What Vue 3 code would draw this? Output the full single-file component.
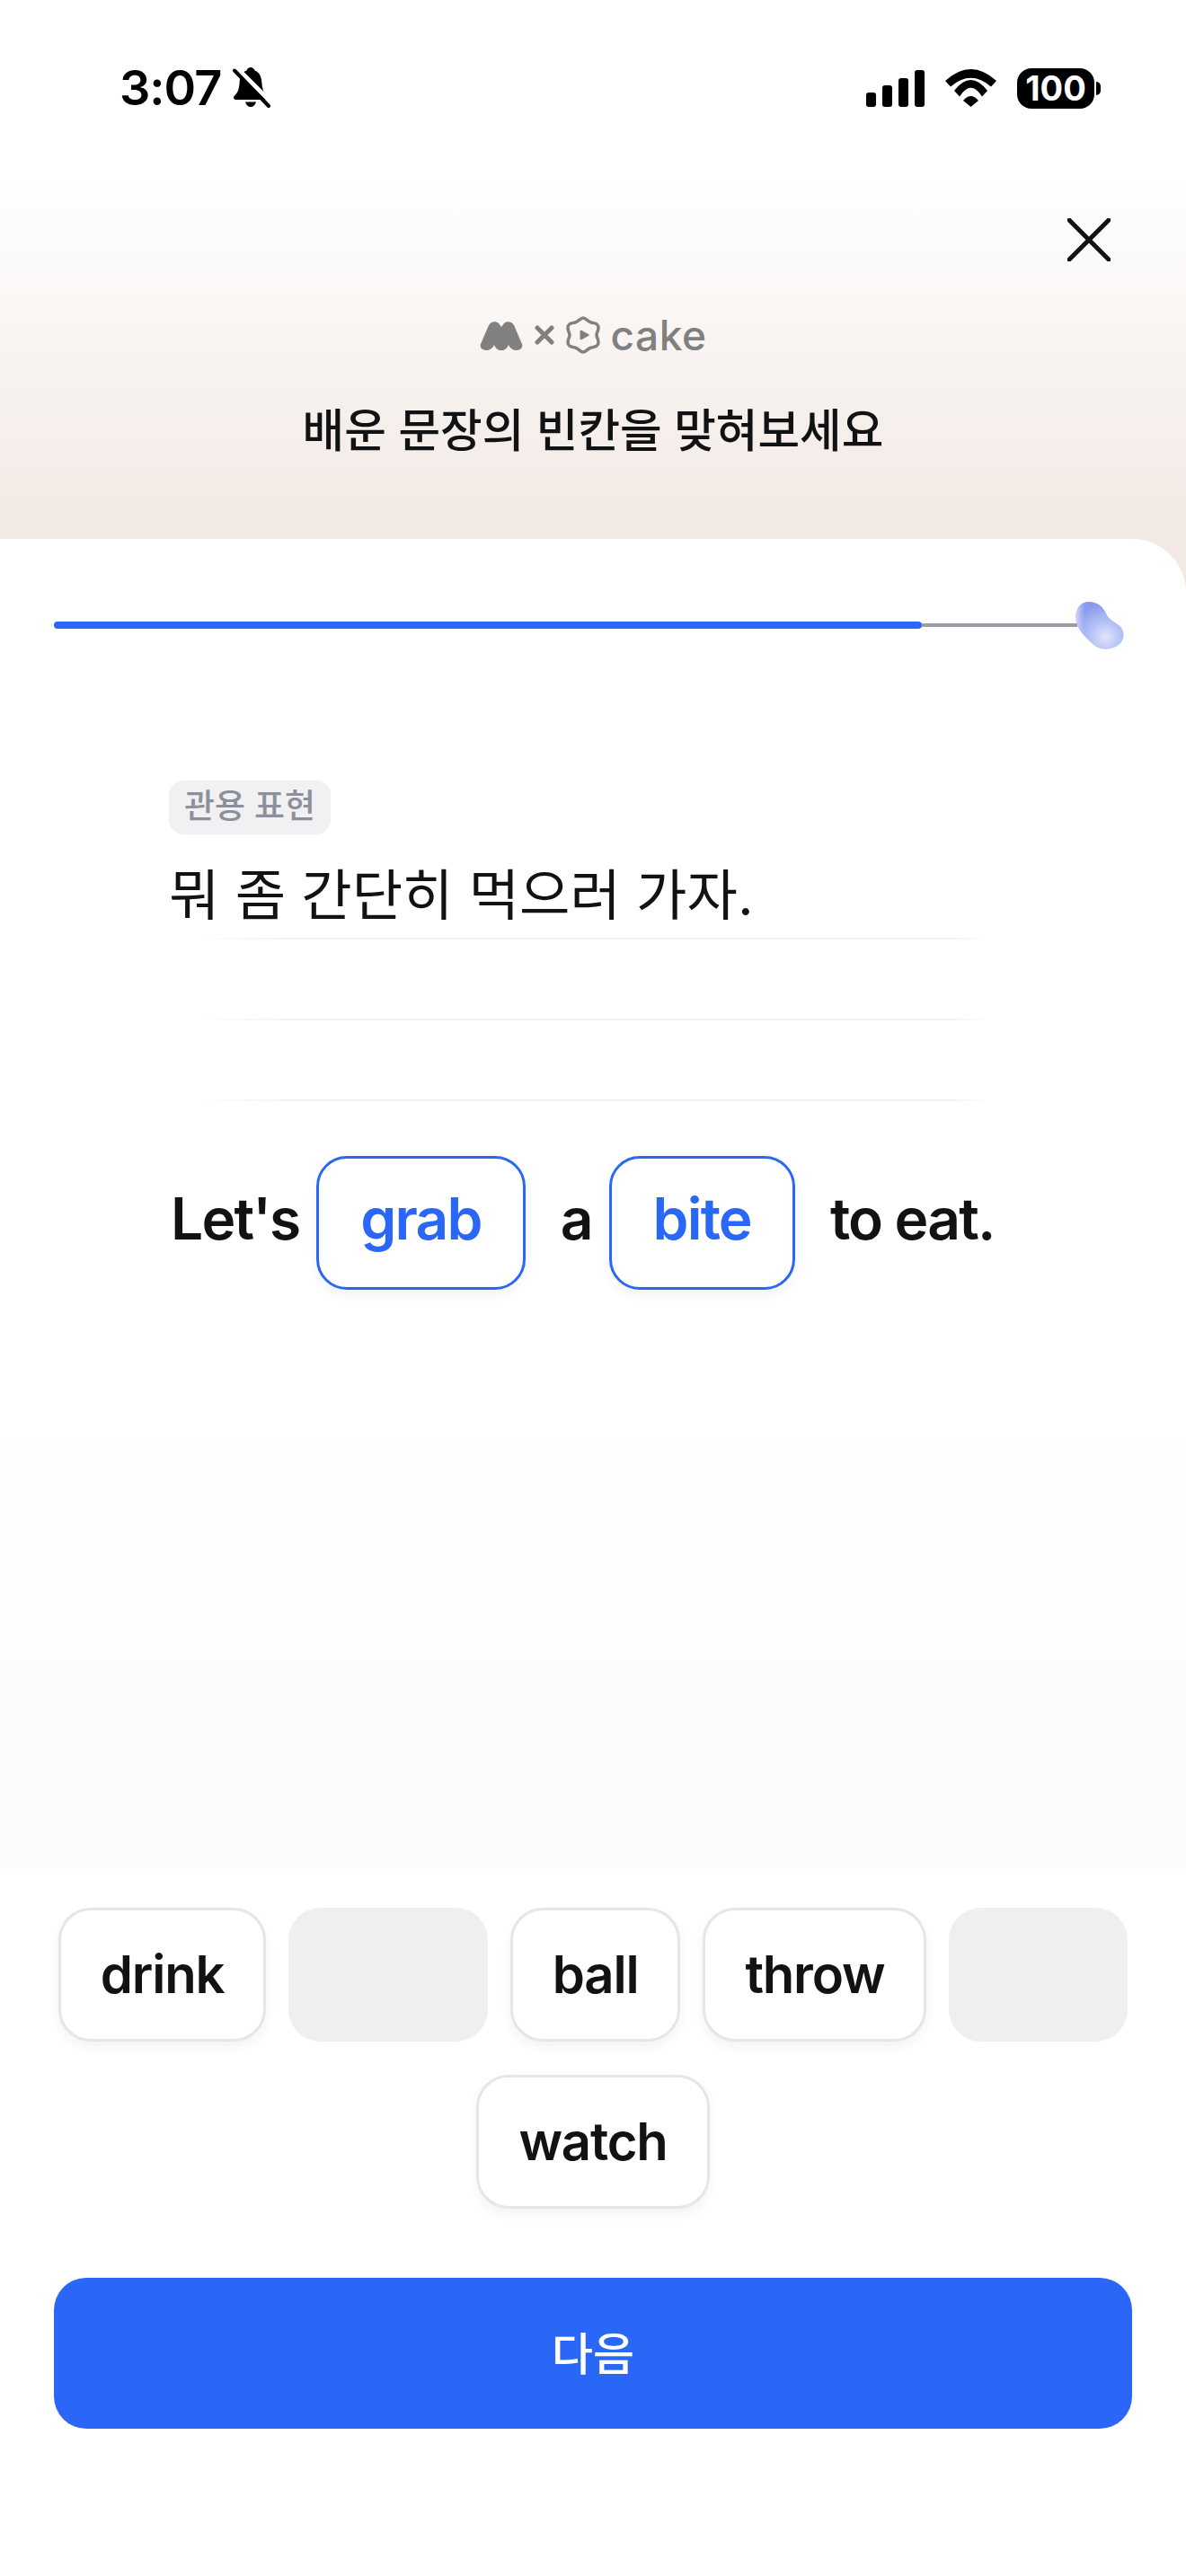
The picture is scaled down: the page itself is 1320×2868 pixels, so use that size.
<template>
  <div class="page">
    <div class="status">
      <div class="status-left">
        <span class="time">3:07</span>
        <svg class="bell" width="42" height="46" viewBox="0 0 42 46">
          <path d="M20 0C22 0 24 1.5 24.5 3.5C31 6 32 12 32.5 18C33 25 35 29 38 31.5C40 33.5 39 36 36 36L4 36C1 36 0 33.5 2 31.5C5 29 7 25 7.5 18C8 12 9 6 15.5 3.5C16 1.5 18 0 20 0Z" fill="#000" />
          <path d="M14 38.5H26C25 42 23 44 20 44C17 44 15 42 14 38.5Z" fill="#000" />
          <path d="M5 1L45 41" stroke="#fff" stroke-width="5" />
          <path d="M2 3.5L40 43" stroke="#000" stroke-width="4" stroke-linecap="round" />
        </svg>
      </div>
      <div class="status-right">
        <div class="signal">
          <i class="b1"></i><i class="b2"></i><i class="b3"></i><i class="b4"></i>
        </div>
        <svg class="wifi" width="57" height="42" viewBox="0 0 57 42">
          <path d="M0 13Q28.5 -13 57 13L51 19.5Q28.5 0 6 19.5Z" fill="#000" />
          <path d="M10 24Q28.5 0 47 24L41 30.5Q28.5 11 16 30.5Z" fill="#000" />
          <path d="M20 35Q28.5 25 37 35L28.5 42Z" fill="#000" />
        </svg>
        <div class="battery">100</div>
      </div>
    </div>

    <div class="header">
      <button class="close">
        <svg width="48" height="48" viewBox="0 0 48 48">
          <path d="M2 2L46 46M46 2L2 46" stroke="#111" stroke-width="5" stroke-linecap="round" />
        </svg>
      </button>
      <div class="logos">
        <svg width="48" height="33" viewBox="0 0 48 33">
          <path d="M1 26L10 5C12 1 18 0 21 3L24 7L27 3C30 0 36 1 38 5L47 26C48.5 30 45 33 41 33C37 33 34 31 32 27C30 31 28 33 24 33C20 33 18 31 16 27C14 31 11 33 7 33C3 33 -0.5 30 1 26Z" fill="#808080" />
        </svg>
        <svg class="times" width="22" height="22" viewBox="0 0 22 22">
          <path d="M3 3L19 19M19 3L3 19" stroke="#808080" stroke-width="5" stroke-linecap="round" />
        </svg>
        <svg class="hex" width="40" height="42" viewBox="0 0 40 42">
          <path d="M20 2C23 2 25 6 29 7C33 8 37 8 37 13C37 17 35 18 35 21C35 24 37 25 37 29C37 34 33 34 29 35C25 36 23 40 20 40C17 40 15 36 11 35C7 34 3 34 3 29C3 25 5 24 5 21C5 18 3 17 3 13C3 8 7 8 11 7C15 6 17 2 20 2Z" fill="none" stroke="#858080" stroke-width="3.5" />
          <path d="M16.5 17C16.5 16 17.5 15.5 18.5 16L26 20C27 20.6 27 21.4 26 22L18.5 26C17.5 26.5 16.5 26 16.5 25Z" fill="#808080" />
        </svg>
        <span class="cake">cake</span>
      </div>
      <h1 class="title">배운 문장의 빈칸을 맞혀보세요</h1>
    </div>

    <div class="sheet-wrap">
      <div class="sheet">
        <div class="progress">
          <div class="progress-fill"></div>
          <div class="progress-rest"></div>
          <svg class="bean" width="54" height="53" viewBox="0 0 54 53">
            <defs>
              <radialGradient id="beanBase" cx="0.62" cy="0.74" r="0.7">
                <stop offset="0" stop-color="#e2e4fc" />
                <stop offset="0.4" stop-color="#b9c6f7" />
                <stop offset="1" stop-color="#8a9aee" />
              </radialGradient>
              <linearGradient id="beanEdge" x1="0" y1="0" x2="1" y2="0">
                <stop offset="0" stop-color="#dcdffb" stop-opacity="0.95" />
                <stop offset="0.2" stop-color="#c4cbf8" stop-opacity="0" />
              </linearGradient>
            </defs>
            <path d="M15 0C24 0 30 5 33 11C35.5 17 39 20 44 23C50.5 27 53.5 31 53.5 37C53.5 46 45 52.7 33 52.7C25 52.7 20 48 16 44C10 38 1 30 0.3 17.7C0 7 6 0 15 0Z" fill="url(#beanBase)" />
            <path d="M15 0C24 0 30 5 33 11C35.5 17 39 20 44 23C50.5 27 53.5 31 53.5 37C53.5 46 45 52.7 33 52.7C25 52.7 20 48 16 44C10 38 1 30 0.3 17.7C0 7 6 0 15 0Z" fill="url(#beanEdge)" />
          </svg>
        </div>

        <div class="content">
          <span class="tag">관용 표현</span>
          <p class="korean">뭐 좀 간단히 먹으러 가자.</p>
          <div class="rule"></div>
          <div class="rule"></div>
          <div class="rule"></div>

          <div class="sentence">
            <span>Let's</span>
            <span class="slot">grab</span>
            <span>a</span>
            <span class="slot">bite</span>
            <span>to eat.</span>
          </div>
        </div>

        <div class="options">
          <div
            v-for="opt in options"
            :key="opt.word"
            class="chip"
            :class="{ used: opt.used }"
          >
            <span>{{ opt.word }}</span>
          </div>
        </div>

        <button class="next">다음</button>
      </div>
    </div>
  </div>
</template>

<script setup>
const options = [
  { word: 'drink' },
  { word: 'grab', used: true },
  { word: 'ball' },
  { word: 'throw' },
  { word: 'bite', used: true },
  { word: 'watch' }
]
</script>

<style>
html,
body {
  margin: 0;
  background: #fff;
}
</style>

<style scoped>
.page {
  width: 1320px;
  height: 2868px;
  display: flex;
  flex-direction: column;
  overflow: hidden;
  background: #fff;
  color: #111214;
  font-family: Inter, "Noto Sans CJK KR", sans-serif;
}

.status {
  height: 196px;
  flex: none;
  display: flex;
  align-items: center;
  justify-content: space-between;
  padding: 0 95px 0 133px;
}

.status-left {
  display: flex;
  align-items: center;
  gap: 13px;
}

.time {
  font-size: 54px;
  font-weight: 600;
  line-height: 60px;
  letter-spacing: -1px;
  color: #000;
}

.status-right {
  display: flex;
  align-items: center;
}

.signal {
  display: flex;
  align-items: flex-end;
  gap: 7px;
  height: 41px;
}

.signal i {
  width: 11px;
  border-radius: 3px;
  background: #000;
}

.b1 { height: 16px; }
.b2 { height: 24px; }
.b3 { height: 32px; }
.b4 { height: 41px; }

.wifi {
  margin-left: 23px;
}

.battery {
  position: relative;
  margin-left: 23px;
  margin-right: 7px;
  width: 86px;
  height: 45px;
  border-radius: 16px;
  background: #000;
  color: #fff;
  font-size: 38px;
  font-weight: 700;
  line-height: 45px;
  text-align: center;
}

.battery::after {
  content: "";
  position: absolute;
  right: -7px;
  top: 15px;
  width: 5px;
  height: 15px;
  border-radius: 0 6px 6px 0;
  background: #000;
}

.header {
  position: relative;
  height: 404px;
  flex: none;
  box-sizing: border-box;
  padding-top: 156px;
  background: linear-gradient(#fff 0%, #f2e9e4 95%);
}

.close {
  position: absolute;
  top: 47px;
  right: 84px;
  width: 48px;
  height: 48px;
  padding: 0;
  border: none;
  background: none;
}

.close svg {
  display: block;
}

.logos {
  display: flex;
  align-items: center;
  justify-content: center;
  height: 42px;
}

.times {
  margin-left: 13px;
}

.hex {
  margin-left: 12px;
}

.cake {
  margin-left: 11px;
  font-size: 46px;
  font-weight: 500;
  line-height: 42px;
  letter-spacing: 0.5px;
  color: #808080;
}

.title {
  margin: 51px 0 0;
  font-size: 50.7px;
  font-weight: 500;
  line-height: 70px;
  text-align: center;
}

.sheet-wrap {
  flex: 1;
  display: flex;
  background: #f2e9e4;
}

.sheet {
  flex: 1;
  display: flex;
  flex-direction: column;
  background: #fff;
  border-top-right-radius: 60px;
}

.progress {
  display: flex;
  align-items: center;
  height: 54px;
  margin: 69px 69px 0 60px;
  flex: none;
}

.progress-fill {
  width: 966px;
  height: 8px;
  border-radius: 4px;
  background: #2b67f6;
}

.progress-rest {
  flex: 1;
  height: 4px;
  background: #9b9da6;
}

.bean {
  flex: none;
  margin-left: -2px;
}

.content {
  flex: 1;
  box-sizing: border-box;
  padding: 146px 0 0 188px;
  background: linear-gradient(#fff 0%, #fff 60%, #fbfbfb 99%, #fff 100%);
}

.tag {
  display: block;
  width: fit-content;
  height: 60px;
  padding: 0 17px;
  border-radius: 16px;
  background: #f1f1f3;
  color: #8d909b;
  font-size: 37px;
  font-weight: 500;
  line-height: 58px;
}

.korean {
  margin: 28px 0 0;
  font-size: 61.3px;
  font-weight: 400;
  line-height: 80px;
}

.rule {
  width: 884px;
  height: 2px;
  margin: 88px 0 0 30px;
  background: linear-gradient(90deg, rgba(242, 242, 242, 0), #f2f2f2 12%, #f2f2f2 95%, rgba(242, 242, 242, 0));
}

.korean + .rule {
  margin-top: 7px;
}

.sentence {
  display: flex;
  align-items: center;
  gap: 19px;
  height: 149px;
  margin: 61px 0 0 2px;
  font-size: 64px;
  font-weight: 600;
  letter-spacing: -1.8px;
  white-space: nowrap;
}

.sentence span {
  padding-bottom: 10px;
}

.sentence .slot {
  box-sizing: border-box;
  height: 149px;
  margin-right: 20px;
  padding: 0 46px;
  border: 3px solid #2b67f6;
  border-radius: 34px;
  background: #fff;
  box-shadow: 0 6px 14px rgba(0, 0, 0, 0.05);
  color: #2b67f6;
  line-height: 133px;
}

.options {
  display: flex;
  flex-wrap: wrap;
  justify-content: center;
  gap: 37px 25px;
  flex: none;
  padding: 34px 50px 0;
}

.chip {
  box-sizing: border-box;
  height: 149px;
  padding: 0 44px;
  border: 3px solid #e6e6e8;
  border-radius: 36px;
  background: #fff;
  box-shadow: 0 6px 14px rgba(0, 0, 0, 0.05);
  font-size: 58px;
  font-weight: 600;
  letter-spacing: -1.2px;
  line-height: 143px;
}

.chip.used {
  padding: 0 46px;
  border-color: #efefef;
  background: #efefef;
  box-shadow: none;
}

.chip.used span {
  visibility: hidden;
}

.next {
  flex: none;
  height: 168px;
  margin: 77px 60px 164px;
  padding: 0 0 6px;
  border: none;
  border-radius: 36px;
  background: #2b67f6;
  color: #fff;
  font-family: inherit;
  font-size: 50px;
  font-weight: 500;
}
</style>
